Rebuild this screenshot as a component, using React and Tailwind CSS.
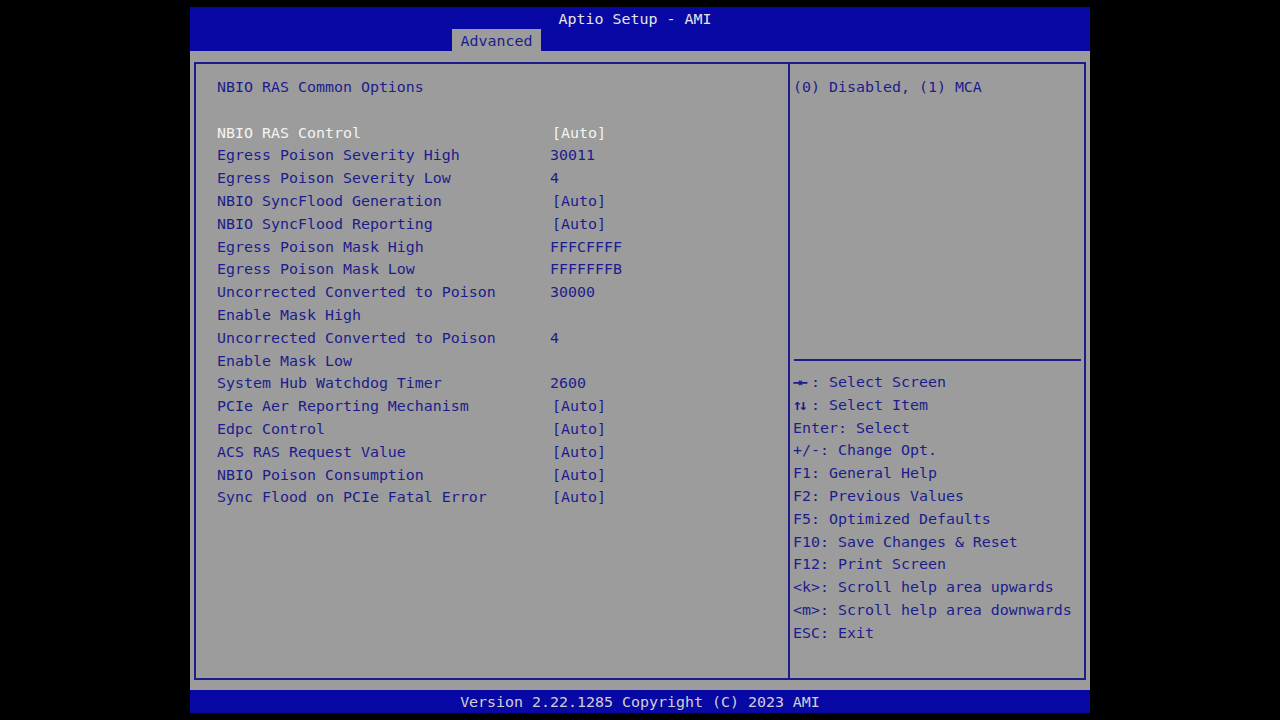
import React from "react";

const items = [
  { label: "NBIO RAS Control", value: "[Auto]", selected: true },
  { label: "Egress Poison Severity High", value: "30011" },
  { label: "Egress Poison Severity Low", value: "4" },
  { label: "NBIO SyncFlood Generation", value: "[Auto]" },
  { label: "NBIO SyncFlood Reporting", value: "[Auto]" },
  { label: "Egress Poison Mask High", value: "FFFCFFFF" },
  { label: "Egress Poison Mask Low", value: "FFFFFFFB" },
  { label: "Uncorrected Converted to Poison", value: "30000" },
  { label: "Enable Mask High", value: "" },
  { label: "Uncorrected Converted to Poison", value: "4" },
  { label: "Enable Mask Low", value: "" },
  { label: "System Hub Watchdog Timer", value: "2600" },
  { label: "PCIe Aer Reporting Mechanism", value: "[Auto]" },
  { label: "Edpc Control", value: "[Auto]" },
  { label: "ACS RAS Request Value", value: "[Auto]" },
  { label: "NBIO Poison Consumption", value: "[Auto]" },
  { label: "Sync Flood on PCIe Fatal Error", value: "[Auto]" },
];

const keys = [
  ["→←", ": Select Screen"],
  ["↑↓", ": Select Item"],
  ["", "Enter: Select"],
  ["", "+/-: Change Opt."],
  ["", "F1: General Help"],
  ["", "F2: Previous Values"],
  ["", "F5: Optimized Defaults"],
  ["", "F10: Save Changes & Reset"],
  ["", "F12: Print Screen"],
  ["", "<k>: Scroll help area upwards"],
  ["", "<m>: Scroll help area downwards"],
  ["", "ESC: Exit"],
];

export default function App() {
  return (
    <div
      className="flex h-[720px] w-[1280px] justify-center bg-black pt-[7px] text-[14.95px] leading-[22.8px] text-[#1c1c8c]"
      style={{ fontFamily: '"DejaVu Sans Mono", "Liberation Mono", monospace' }}
    >
      <div className="flex h-[706px] w-[900px] flex-col">
        {/* header */}
        <div className="flex h-[44px] flex-col bg-[#0808a4]">
          <div className="h-[22px] pr-[10px] pt-[1px] text-center leading-[22px] text-[#e4e4e4]">
            Aptio Setup - AMI
          </div>
          <div className="flex pl-[262px]">
            <div className="h-[22px] w-[89px] bg-[#9c9c9c] pt-[1px] text-center leading-[22px] text-[#1c1c8c]">
              Advanced
            </div>
          </div>
        </div>

        {/* body */}
        <div className="flex flex-1 bg-[#9c9c9c] pb-[10px] pl-[4px] pr-[4px] pt-[11px]">
          <div className="flex flex-1 border-2 border-[#1c1c8c]">
            {/* left panel */}
            <div className="w-[592px] pl-[21px] pt-[12px]">
              <div>NBIO RAS Common Options</div>
              <div className="h-[22.8px]" />
              {items.map((it, i) => (
                <div key={i} className={`flex ${it.selected ? "text-[#f4f4f4]" : ""}`}>
                  <div className="w-[333px] whitespace-pre">{it.label}</div>
                  <div className={it.value.startsWith("[") ? "ml-[2px]" : ""}>{it.value}</div>
                </div>
              ))}
            </div>

            {/* right panel */}
            <div className="flex flex-1 flex-col border-l-2 border-[#1c1c8c] pl-[3px] pr-[3px]">
              <div className="h-[295px] pt-[12px]">(0) Disabled, (1) MCA</div>
              <div className="ml-[1px] h-[2px] bg-[#1c1c8c]" />
              <div className="pt-[10px]">
                {keys.map(([a, t], i) => (
                  <div key={i} className="whitespace-pre">
                    {a && <span className="inline-block w-[18px] font-bold tracking-[-3px]">{a}</span>}
                    {t}
                  </div>
                ))}
              </div>
            </div>
          </div>
        </div>

        {/* footer */}
        <div className="h-[23px] bg-[#0808a4] pt-[1px] text-center leading-[23px] text-[#d0d0d0]">
          Version 2.22.1285 Copyright (C) 2023 AMI
        </div>
      </div>
    </div>
  );
}
